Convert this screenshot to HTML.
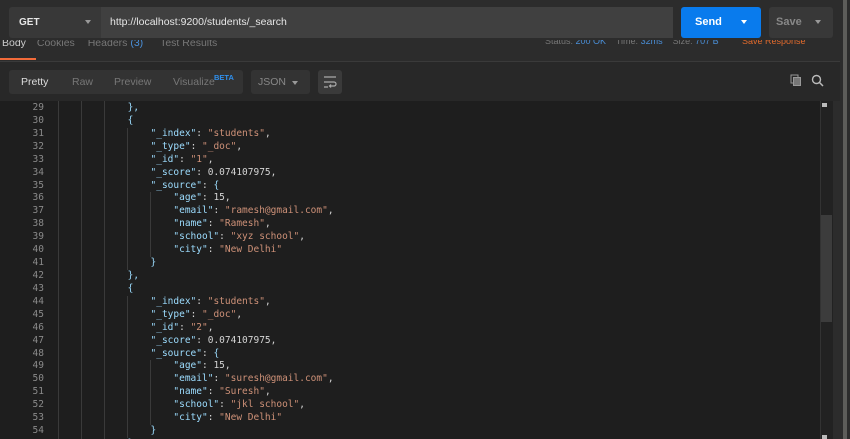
<!DOCTYPE html>
<html><head><style>
body{margin:0;width:850px;height:439px;overflow:hidden;background:#2c2c2c;font-family:"Liberation Sans",sans-serif;position:relative}
.a{position:absolute}
.code{position:absolute;left:0;top:101px;width:820px;height:338px;background:#1e1e1e;overflow:hidden}
.ln{position:absolute;left:0;width:44px;text-align:right;color:#8a8a8a;font:9.5px/12.92px "DejaVu Sans Mono",monospace}
.tx{position:absolute;left:59px;white-space:pre;color:#d4d4d4;font:9.5px/12.92px "DejaVu Sans Mono",monospace}
.k{color:#9cdcfe}.s{color:#ce9178}.b{color:#9cdcfe}.n{color:#d4d4d4}
.g{position:absolute;width:1px;background:#3a3a3a}
</style></head><body>
<div class="a" style="left:9px;top:7px;width:92px;height:31px;background:#383838;border-radius:3px 0 0 3px"></div>
<div class="a" style="left:19px;top:17px;color:#e6e6e6;font-size:10px;font-weight:bold">GET</div>
<div class="a" style="left:85px;top:20px;width:0;height:0;border-left:3.5px solid transparent;border-right:3.5px solid transparent;border-top:4px solid #999"></div>
<div class="a" style="left:101px;top:7px;width:572px;height:31px;background:#404040"></div>
<div class="a" style="left:110px;top:16px;color:#e6e6e6;font-size:10.5px">http://localhost:9200/students/_search</div>
<div class="a" style="left:681px;top:7px;width:80px;height:31px;background:#097bed;border-radius:3px"></div>
<div class="a" style="left:695px;top:16px;color:#fff;font-size:11px;font-weight:bold">Send</div>
<div class="a" style="left:741px;top:20px;width:0;height:0;border-left:3.5px solid transparent;border-right:3.5px solid transparent;border-top:4px solid #fff"></div>
<div class="a" style="left:769px;top:7px;width:64px;height:31px;background:#383838;border-radius:3px"></div>
<div class="a" style="left:776px;top:16px;color:#888;font-size:11px;font-weight:bold">Save</div>
<div class="a" style="left:815px;top:20px;width:0;height:0;border-left:3.5px solid transparent;border-right:3.5px solid transparent;border-top:4px solid #999"></div>
<div class="a" style="left:843px;top:0;width:4px;height:439px;background:#5d5d5a"></div>
<div class="a" style="left:0;top:40px;width:840px;height:21px;overflow:hidden">
 <div class="a" style="left:2px;top:-3px;font-size:10.5px;color:#ccc;white-space:nowrap">Body <span style="color:#777;margin-left:8px">Cookies</span> <span style="color:#777;margin-left:10px">Headers <span style="color:#4a8fd8">(3)</span></span> <span style="color:#777;margin-left:14px">Test Results</span></div>
 <div class="a" style="left:545px;top:-4px;font-size:9px;color:#777;white-space:nowrap">Status: <span style="color:#4a8fd8">200 OK</span> &nbsp;&nbsp; Time: <span style="color:#4a8fd8">32ms</span> &nbsp;&nbsp; Size: <span style="color:#4a8fd8">707 B</span></div>
 <div class="a" style="left:742px;top:-4px;font-size:9px;color:#e06a2c;white-space:nowrap">Save Response</div>
 <div class="a" style="left:0;top:18px;width:36px;height:2px;background:#f26b3a"></div>
</div>
<div class="a" style="left:0;top:61px;width:840px;height:1px;background:#3a3a3a"></div>
<div class="a" style="left:0;top:62px;width:840px;height:39px;background:#282828"></div>
<div class="a" style="left:9px;top:70px;width:234px;height:24px;background:#333;border-radius:3px"></div>
<div class="a" style="left:21px;top:76px;font-size:10.5px;color:#ddd">Pretty</div>
<div class="a" style="left:72px;top:76px;font-size:10.5px;color:#777">Raw</div>
<div class="a" style="left:114px;top:76px;font-size:10.5px;color:#777">Preview</div>
<div class="a" style="left:173px;top:76px;font-size:10.5px;color:#777">Visualize</div>
<div class="a" style="left:214px;top:73px;font-size:7.5px;font-weight:bold;color:#2f8fec">BETA</div>
<div class="a" style="left:251px;top:70px;width:59px;height:24px;background:#333;border-radius:3px"></div>
<div class="a" style="left:258px;top:76px;font-size:10.5px;color:#888">JSON</div>
<div class="a" style="left:292px;top:81px;width:0;height:0;border-left:3.5px solid transparent;border-right:3.5px solid transparent;border-top:4px solid #999"></div>
<div class="a" style="left:318px;top:70px;width:24px;height:24px;background:#3a3a3a;border-radius:3px"></div>
<svg class="a" style="left:322px;top:75px" width="16" height="14"><path d="M2 2H14M2 7H12a2 2 0 0 1 0 4H8M2 12H6M9 9.5L7.5 11 9 12.5" stroke="#aaa" stroke-width="1.2" fill="none"/></svg>
<svg class="a" style="left:790px;top:74px" width="12" height="12"><rect x="1" y="1" width="7" height="8" fill="none" stroke="#999"/><rect x="3.5" y="3.5" width="7" height="8" fill="#777" stroke="#999"/></svg>
<svg class="a" style="left:811px;top:74px" width="14" height="14"><circle cx="5.5" cy="5.5" r="4" fill="none" stroke="#bbb" stroke-width="1.4"/><path d="M8.5 8.5L12 12" stroke="#bbb" stroke-width="1.5"/></svg>
<div class="code">
<div class="g" style="left:58px;top:0;height:338px"></div>
<div class="g" style="left:81px;top:0;height:338px"></div>
<div class="g" style="left:104px;top:0;height:338px"></div>
<div class="g" style="left:127px;top:27px;height:142px"></div>
<div class="g" style="left:127px;top:195px;height:142px"></div>
<div class="g" style="left:150px;top:91px;height:65px"></div>
<div class="g" style="left:150px;top:259px;height:65px"></div>
<div class="ln" style="top:1px">29<br>30<br>31<br>32<br>33<br>34<br>35<br>36<br>37<br>38<br>39<br>40<br>41<br>42<br>43<br>44<br>45<br>46<br>47<br>48<br>49<br>50<br>51<br>52<br>53<br>54<br>55</div>
<div class="tx" style="top:1px"><span class="b">            },</span>
<span class="b">            {</span>
                <span class="k">"_index"</span>: <span class="s">"students"</span>,
                <span class="k">"_type"</span>: <span class="s">"_doc"</span>,
                <span class="k">"_id"</span>: <span class="s">"1"</span>,
                <span class="k">"_score"</span>: 0.074107975,
                <span class="k">"_source"</span>: <span class="b">{</span>
                    <span class="k">"age"</span>: 15,
                    <span class="k">"email"</span>: <span class="s">"ramesh@gmail.com"</span>,
                    <span class="k">"name"</span>: <span class="s">"Ramesh"</span>,
                    <span class="k">"school"</span>: <span class="s">"xyz school"</span>,
                    <span class="k">"city"</span>: <span class="s">"New Delhi"</span>
<span class="b">                }</span>
<span class="b">            },</span>
<span class="b">            {</span>
                <span class="k">"_index"</span>: <span class="s">"students"</span>,
                <span class="k">"_type"</span>: <span class="s">"_doc"</span>,
                <span class="k">"_id"</span>: <span class="s">"2"</span>,
                <span class="k">"_score"</span>: 0.074107975,
                <span class="k">"_source"</span>: <span class="b">{</span>
                    <span class="k">"age"</span>: 15,
                    <span class="k">"email"</span>: <span class="s">"suresh@gmail.com"</span>,
                    <span class="k">"name"</span>: <span class="s">"Suresh"</span>,
                    <span class="k">"school"</span>: <span class="s">"jkl school"</span>,
                    <span class="k">"city"</span>: <span class="s">"New Delhi"</span>
<span class="b">                }</span>
<span class="b">            }</span></div>
</div>
<div class="a" style="left:820px;top:101px;width:12px;height:338px;background:#222;border-left:1px solid #333"></div>
<div class="a" style="left:821px;top:215px;width:11px;height:107px;background:#3c3c3c"></div>
<div class="a" style="left:822px;top:103px;width:5px;height:4px;background:#bbb"></div>
<div class="a" style="left:822px;top:435px;width:5px;height:4px;background:#bbb"></div>
</body></html>
